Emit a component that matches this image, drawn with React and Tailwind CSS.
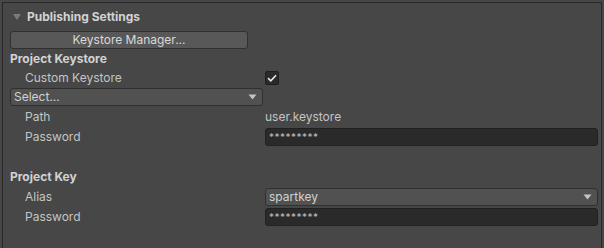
import React from "react";

const Caret = () => (
  <svg width="9" height="6" viewBox="0 0 9 6" className="shrink-0">
    <path d="M0.5 0.5 H8.5 L4.5 5.5 Z" fill="#c4c4c4" />
  </svg>
);

const Dropdown = ({ value, className }) => (
  <div
    className={`flex h-[18px] items-center justify-between rounded-[3px] border border-[#303030] bg-[#515151] pl-[3px] pr-[5px] text-[12px] text-[#d2d2d2] ${className}`}
  >
    <span>{value}</span>
    <Caret />
  </div>
);

const PasswordField = () => (
  <div className="flex h-[18px] w-[333px] items-center rounded-[3px] border border-[#212121] bg-[#2a2a2a] pl-[3px] text-[10px] tracking-[0.5px] text-[#bdbdbd]">
    *********
  </div>
);

const Row = ({ label, children, h = "h-[20px]" }) => (
  <div className={`flex ${h} items-center`}>
    <div className="w-[255px] pl-[15px] text-[#c4c4c4]">{label}</div>
    {children}
  </div>
);

export default function App() {
  return (
    <div
      className="h-[248px] w-[604px] overflow-hidden bg-[#474747] pl-[2px] pt-[2px] text-[12px]"
      style={{ fontFamily: "Inter, 'Noto Sans', sans-serif" }}
    >
      <div className="h-[260px] w-[600px] border-l border-r border-t border-[#282828] pl-[7px] pt-[4px]">
        <div className="flex h-[20px] items-center gap-[6px] pl-[3px] font-bold text-[#d2d2d2]">
          <svg width="8" height="6" viewBox="0 0 8 6">
            <path d="M0 0 H8 L4 6 Z" fill="#7a7a7a" />
          </svg>
          <span>Publishing Settings</span>
        </div>

        <div className="mt-[4px] flex h-[18px] w-[238px] items-center justify-center rounded-[3px] border border-[#303030] bg-[#585858] text-[#d8d8d8]">
          Keystore Manager...
        </div>

        <div className="flex h-[19px] items-center font-bold text-[#d2d2d2]">Project Keystore</div>

        <Row label="Custom Keystore" h="h-[19px]">
          <div className="flex h-[14px] w-[14px] items-center justify-center rounded-[2px] border border-[#1e1e1e] bg-[#2a2a2a]">
            <svg width="10" height="8" viewBox="0 0 10 8">
              <path d="M1 4.2 L3.8 6.8 L9 1.2" fill="none" stroke="#e8e8e8" strokeWidth="1.6" />
            </svg>
          </div>
        </Row>

        <Dropdown value="Select..." className="mt-[1px] w-[253px]" />

        <div className="mt-[1px]">
          <Row label="Path">
            <span className="text-[#c4c4c4]">user.keystore</span>
          </Row>
          <Row label="Password">
            <PasswordField />
          </Row>
          <div className="h-[20px]" />
          <div className="flex h-[20px] items-center font-bold text-[#d2d2d2]">Project Key</div>
          <Row label="Alias">
            <Dropdown value="spartkey" className="w-[333px]" />
          </Row>
          <Row label="Password">
            <PasswordField />
          </Row>
        </div>
      </div>
    </div>
  );
}
